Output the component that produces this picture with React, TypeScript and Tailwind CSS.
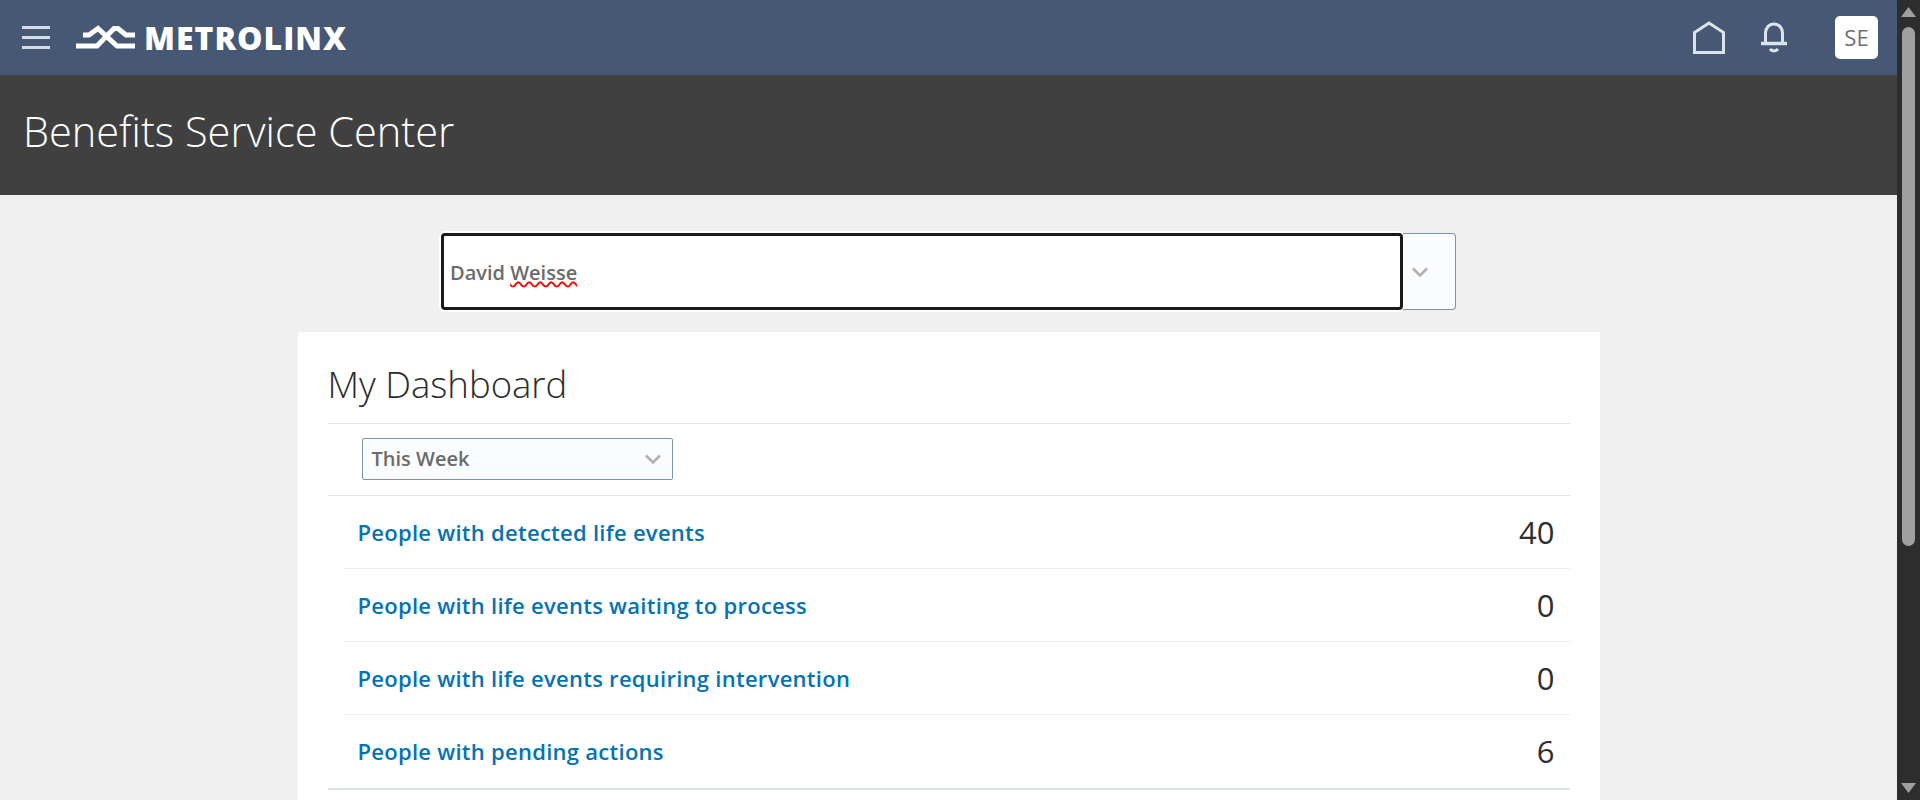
import React from 'react';

const rows = [
    { label: 'People with detected life events', value: '40' },
    { label: 'People with life events waiting to process', value: '0' },
    { label: 'People with life events requiring intervention', value: '0' },
    { label: 'People with pending actions', value: '6' },
];

const Chevron: React.FC = () => (
    <svg width="16" height="10" viewBox="0 0 16 10" fill="none" stroke="#b0b0b0" strokeWidth="2.5">
        <path d="M1 1.5 8 8.5 15 1.5" />
    </svg>
);

const Logo: React.FC = () => (
    <svg width="59" height="25" viewBox="0 0 59 25" fill="none" stroke="white" strokeWidth="5">
        <path d="M7 10H13L22 3.5 41 21H59" />
        <path d="M0 21H21L38 3.5H42L50 10H59" />
    </svg>
);

const Scrollbar: React.FC = () => (
    <div className="w-[23px] h-full bg-[#2d2d2d] flex flex-col items-center shrink-0">
        <svg width="15" height="11" viewBox="0 0 15 11" className="mt-[7px] shrink-0"><path d="M7.5 0 15 10H0Z" fill="#9e9e9e" /></svg>
        <div className="w-[13px] h-[519px] mt-[9px] rounded-full bg-[#a0a0a0]" />
        <svg width="15" height="11" viewBox="0 0 15 11" className="mt-auto mb-[6px] shrink-0"><path d="M0 0H15L7.5 10Z" fill="#9e9e9e" /></svg>
    </div>
);

export default function App() {
    return (
        <div className="flex h-[800px] overflow-hidden bg-[#f0f0f0] font-['Open_Sans','Noto_Sans',sans-serif]">
            <div className="flex-1 min-w-0 flex flex-col">
                <header className="h-[75px] shrink-0 bg-[#465873] flex items-center pl-[22px] pr-[19px]">
                    <div className="w-[28px] flex flex-col gap-[7px]">
                        <div className="h-[3px] bg-[#d3dce8]" />
                        <div className="h-[3px] bg-[#d3dce8]" />
                        <div className="h-[3px] bg-[#d3dce8]" />
                    </div>
                    <div className="ml-[26px] flex items-center gap-[9px]">
                        <Logo />
                        <span className="font-extrabold text-[32px] tracking-[1px] leading-none text-white">METROLINX</span>
                    </div>
                    <div className="ml-auto flex items-center">
                        <svg width="34" height="34" viewBox="0 0 34 34" fill="none" stroke="#dbe3ee" strokeWidth="3">
                            <path d="M2.5 31.5V11.5L17 2 31.5 11.5V31.5Z" />
                        </svg>
                        <svg width="28" height="31" viewBox="0 0 28 31" fill="none" stroke="#dbe3ee" strokeWidth="3" className="ml-[34px]">
                            <path d="M5.5 21V11C5.5 6 9 2 14 2S22.5 6 22.5 11V21" />
                            <path d="M1 21.5H27" strokeWidth="3.5" />
                            <path d="M10 27C12 29.5 16 29.5 18 27" />
                        </svg>
                        <div className="ml-[47px] w-[43px] h-[43px] rounded-[5px] bg-white flex items-center justify-center text-[22px] text-[#707070]">SE</div>
                    </div>
                </header>
                <div className="h-[120px] shrink-0 bg-[#404040] flex items-center pl-[23px]">
                    <h1 className="text-[41.5px] font-light leading-none text-white pb-[6px]">Benefits Service Center</h1>
                </div>
                <main className="flex-1 min-h-0 flex flex-col items-center pt-[38px]">
                    <div className="flex w-[1015px] h-[77px] shrink-0">
                        <div className="flex-1 rounded-[4px] border-[3px] border-[#1a1a1a] bg-white flex items-center pl-[6px] pt-[2px] ring-2 ring-white">
                            <span className="text-[20px] font-semibold text-[#6b6b6b]">
                                David <span className="underline decoration-wavy decoration-[#ff0000] decoration-[1.5px] underline-offset-1">Weisse</span>
                            </span>
                        </div>
                        <div className="w-[53px] rounded-r-[4px] border border-l-0 border-[#7f93a3] bg-[#fbfcfe] flex items-center pl-[9px]">
                            <Chevron />
                        </div>
                    </div>
                    <section className="mt-[22px] w-[1302px] flex-1 bg-white px-[30px] pt-[34px]">
                        <h2 className="text-[36.5px] font-light leading-none text-[#2c2c2c] h-[57px]">My Dashboard</h2>
                        <div className="h-[73px] border-y border-[#dbe2ea] pl-[34px] pb-[1px] flex items-center">
                            <div className="w-[311px] h-[42px] rounded-[2px] border border-[#7f93a3] bg-[#fbfcfe] flex items-center justify-between pl-[9px] pr-[11px]">
                                <span className="text-[20px] font-semibold text-[#6b6b6b]">This Week</span>
                                <Chevron />
                            </div>
                        </div>
                        <div className="border-b-2 border-[#dbe2ea]">
                            {rows.map((row, i) => (
                                <div key={row.label} className={`ml-[15px] h-[73px] pl-[15px] pr-[15px] flex items-center justify-between ${i < rows.length - 1 ? 'border-b border-[#eceff2]' : ''}`}>
                                    <a className="text-[22px] tracking-[0.27px] font-semibold text-[#0572b1]">{row.label}</a>
                                    <span className="text-[31px] text-[#2e2e2e]">{row.value}</span>
                                </div>
                            ))}
                        </div>
                    </section>
                </main>
            </div>
            <Scrollbar />
        </div>
    );
}
